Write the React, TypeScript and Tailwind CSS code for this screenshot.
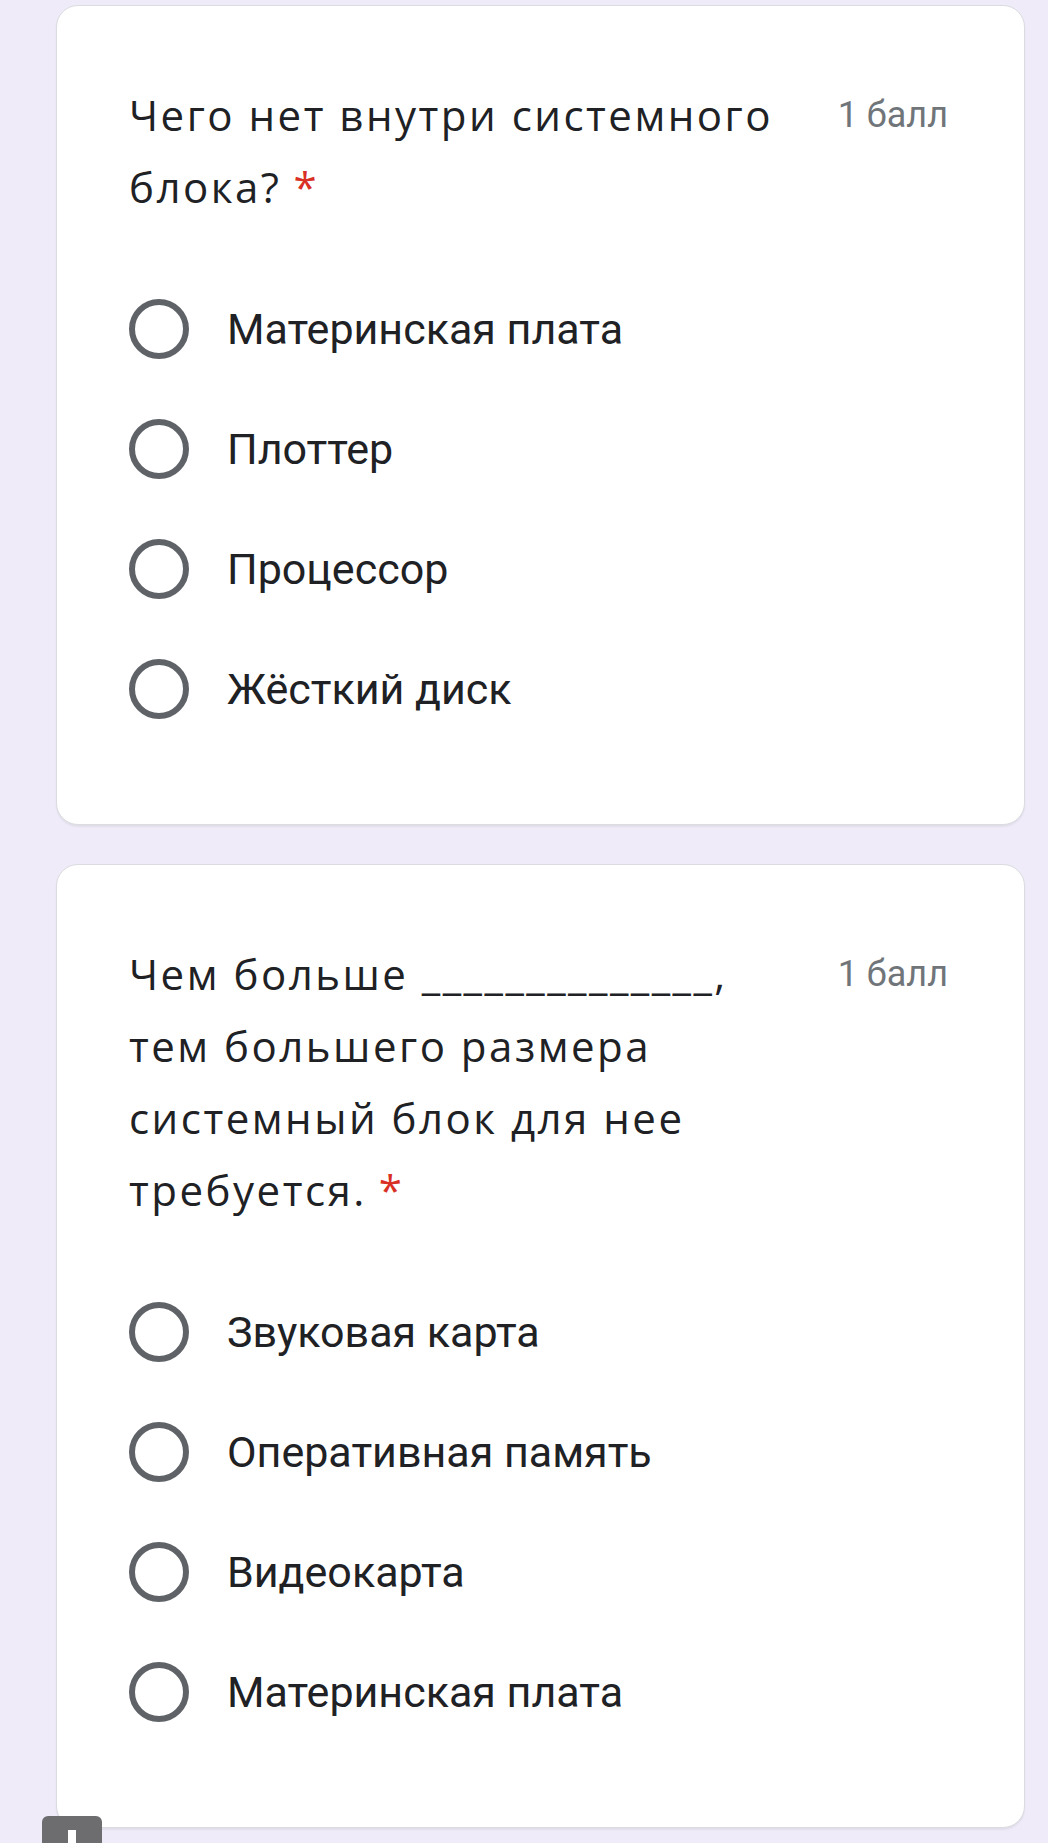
const questions = [
    {
        title: "Чем больше ______________, тем большего размера системный блок для нее требуется.",
        points: "1 балл",
        options: ["Звуковая карта", "Оперативная память", "Видеокарта", "Материнская плата"],
    },
];

const first = {
    title: "Чего нет внутри системного блока?",
    points: "1 балл",
    options: ["Материнская плата", "Плоттер", "Процессор", "Жёсткий диск"],
};

function Radio() {
    return <span className="w-[60px] h-[60px] shrink-0 rounded-full border-[6px] border-[#5f6368]" />;
}

function QuestionCard({ title, points, options }: { title: string; points: string; options: string[] }) {
    return (
        <div className="w-full bg-white rounded-[22px] border border-[#dadce0] shadow-[0_2px_2px_rgba(0,0,0,0.06)] pt-[73px] pb-[105px] pl-[72px] pr-[76px]">
            <div className="flex items-start gap-[53px]">
                <h2 className="flex-1 text-[42px] tracking-[2.5px] leading-[72px] text-[#202124] font-['Open_Sans',sans-serif]">
                    {title}
                    <span className="text-[#d93025] ml-[12px]">*</span>
                </h2>
                <span className="shrink-0 text-[36px] leading-[72px] text-[#70757a] font-['Roboto',sans-serif]">
                    {points}
                </span>
            </div>
            <div className="mt-[76px] flex flex-col gap-[60px]">
                {options.map((opt) => (
                    <label key={opt} className="flex items-center gap-[38px] h-[60px]">
                        <Radio />
                        <span className="text-[43px] text-[#202124] font-['Roboto',sans-serif]">{opt}</span>
                    </label>
                ))}
            </div>
        </div>
    );
}

export default function App() {
    return (
        <div className="relative w-full min-h-[1843px] bg-[#efebf8] pt-[5px] pl-[56px] pr-[23px] overflow-hidden">
            <div className="flex flex-col gap-[39px]">
                <QuestionCard {...first} />
                {questions.map((q) => (
                    <QuestionCard key={q.title} {...q} />
                ))}
            </div>
            <div className="absolute left-[42px] top-[1816px] w-[60px] h-[40px] rounded-t-[6px] bg-[#6d6d70] flex justify-center pt-[14px]">
                <span className="w-[8px] h-[20px] bg-white" />
            </div>
        </div>
    );
}
